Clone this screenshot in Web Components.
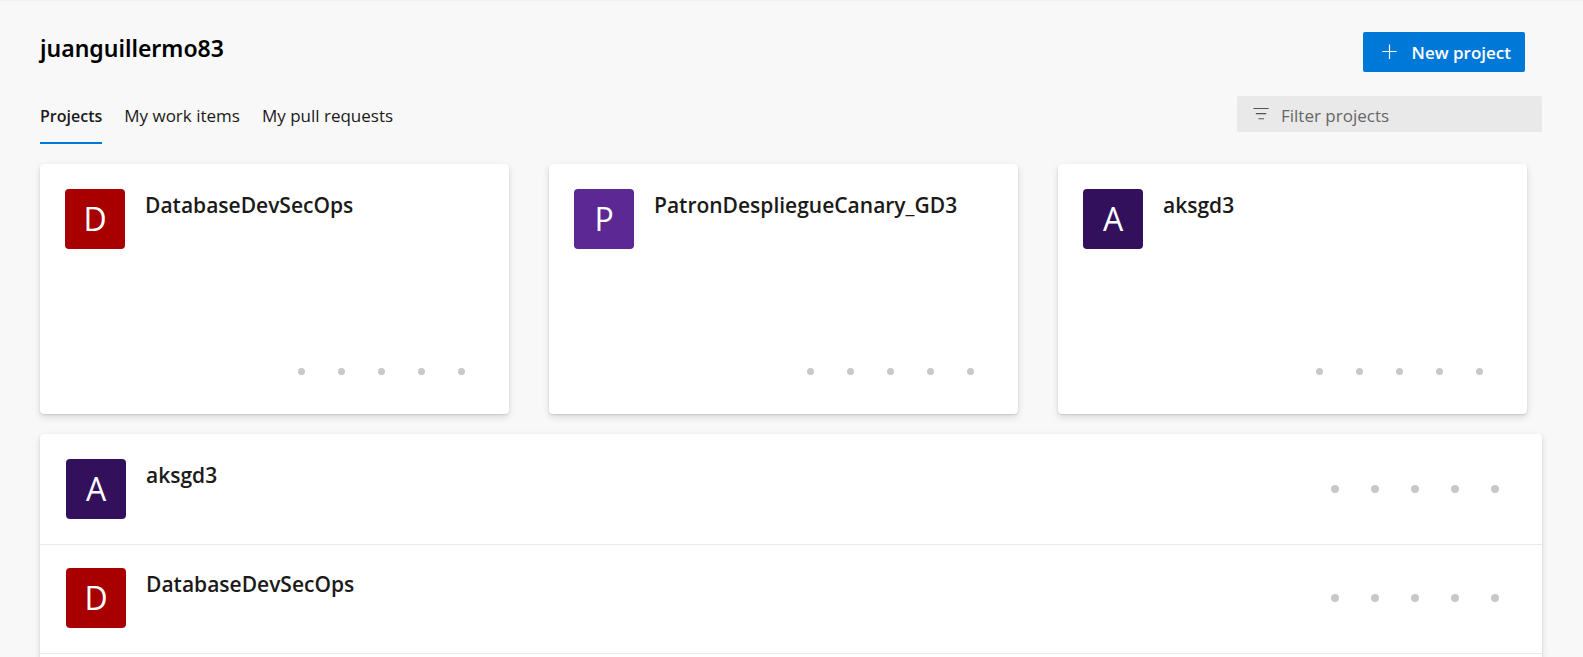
<!DOCTYPE html>
<html lang="en">
<head>
<meta charset="utf-8">
<meta name="viewport" content="width=device-width, initial-scale=1">
<title>juanguillermo83 - Projects</title>
<style>
  body {
    margin: 0;
    background: #f8f8f8;
    color: #1b1a19;
    font-family: "Open Sans", "Noto Sans", sans-serif;
    font-size: 17px;
  }
</style>
</head>
<body>
<projects-page>
  <org-header slot="header" name="juanguillermo83"></org-header>
  <tab-bar slot="tabs">
    <tab-link href="#projects" active>Projects</tab-link>
    <tab-link href="#work-items">My work items</tab-link>
    <tab-link href="#pull-requests">My pull requests</tab-link>
    <filter-box slot="filter" label="Filter projects"></filter-box>
  </tab-bar>
  <project-card slot="cards" name="DatabaseDevSecOps" color="#a80000"></project-card>
  <project-card slot="cards" name="PatronDespliegueCanary_GD3" color="#5c2893"></project-card>
  <project-card slot="cards" name="aksgd3" color="#32105c"></project-card>
  <project-row slot="rows" name="aksgd3" color="#32105c"></project-row>
  <project-row slot="rows" name="DatabaseDevSecOps" color="#a80000"></project-row>
</projects-page>

<script>
  class Component extends HTMLElement {
    connectedCallback() {
      if (this.shadowRoot) return;
      this.attachShadow({ mode: "open" }).innerHTML = this.render();
    }
    attr(name) {
      return this.getAttribute(name) || "";
    }
  }

  customElements.define("projects-page", class extends Component {
    render() {
      return `
        <style>
          :host {
            --shadow: 0 3px 7px rgba(0, 0, 0, .13), 0 1px 2px rgba(0, 0, 0, .11);
            box-sizing: border-box;
            display: flex;
            flex-direction: column;
            gap: 20px;
            min-height: 100vh;
            padding: 31px 41px 0 40px;
            border-top: 1px solid #f1f1f1;
          }
          .top { display: grid; gap: 24px; }
          .cards {
            display: grid;
            grid-template-columns: repeat(3, minmax(0, 1fr));
            gap: 40px;
            margin-right: 15px;
          }
          .list {
            flex: 1;
            padding-top: 2px;
            background: #fff;
            border-radius: 4px 4px 0 0;
            box-shadow: var(--shadow);
          }
        </style>
        <div class="top"><slot name="header"></slot><slot name="tabs"></slot></div>
        <main class="cards"><slot name="cards"></slot></main>
        <section class="list" aria-label="All projects"><slot name="rows"></slot></section>`;
    }
  });

  customElements.define("org-header", class extends Component {
    render() {
      return `
        <style>
          :host {
            display: flex;
            align-items: flex-start;
            justify-content: space-between;
            padding-right: 17px;
          }
          h1 {
            margin: 0;
            color: #000;
            font: 600 23px/32px "Noto Sans", "Open Sans", sans-serif;
          }
          button {
            display: flex;
            align-items: center;
            gap: 15px;
            height: 40px;
            padding: 0 14px 0 18px;
            border: 0;
            border-radius: 2px;
            background: #0078d7;
            color: #fff;
            font: 600 17px "Open Sans", "Noto Sans", sans-serif;
          }
        </style>
        <h1>${this.attr("name")}</h1>
        <button type="button">
          <svg width="16" height="16" viewBox="0 0 16 16" fill="none" stroke="#fff" stroke-width="1.2" aria-hidden="true">
            <path d="M8.5 .5v14.5M1.3 7.5h14.4"/>
          </svg>
          New project
        </button>`;
    }
  });

  customElements.define("tab-bar", class extends Component {
    render() {
      return `
        <style>
          :host { display: flex; align-items: flex-start; justify-content: space-between; }
          nav { display: flex; gap: 22px; }
        </style>
        <nav aria-label="Views"><slot></slot></nav>
        <slot name="filter"></slot>`;
    }
  });

  customElements.define("tab-link", class extends Component {
    render() {
      return `
        <style>
          :host { display: block; }
          a {
            display: block;
            padding-bottom: 6px;
            border-bottom: 2px solid transparent;
            color: inherit;
            line-height: 40px;
            text-decoration: none;
            white-space: nowrap;
          }
          :host([active]) a { border-color: #0078d7; font-weight: 600; font-size: 16px; }
        </style>
        <a href="${this.attr("href")}"><slot></slot></a>`;
    }
  });

  customElements.define("filter-box", class extends Component {
    render() {
      return `
        <style>
          :host { display: block; width: 305px; }
          label {
            display: flex;
            align-items: center;
            gap: 12px;
            height: 36px;
            padding: 0 16px;
            border-radius: 2px;
            background: #e9e9e9;
          }
          svg { flex: none; }
          input {
            flex: 1;
            min-width: 0;
            height: 36px;
            padding: 2px 0 0;
            box-sizing: border-box;
            border: 0;
            outline: 0;
            background: none;
            color: #1b1a19;
            font: 17px "Open Sans", "Noto Sans", sans-serif;
          }
          input::placeholder { color: #666; opacity: 1; }
        </style>
        <label>
          <svg width="16" height="16" viewBox="0 0 16 16" fill="none" stroke="#555" stroke-width="1.1" aria-hidden="true">
            <path d="M.5 2.5h15.2M2.8 7.6h10.4M5.4 12.7h5.6"/>
          </svg>
          <input type="text" placeholder="${this.attr("label")}" aria-label="${this.attr("label")}">
        </label>`;
    }
  });

  customElements.define("project-avatar", class extends Component {
    render() {
      return `
        <style>
          :host {
            display: block;
            flex: none;
            width: 60px;
            border-radius: 4px;
            background: ${this.attr("color")};
            color: #fff;
            font-size: 32px;
            line-height: 60px;
            text-align: center;
          }
        </style>
        <slot></slot>`;
    }
  });

  customElements.define("loading-dots", class extends Component {
    render() {
      return `
        <style>
          :host { --size: 8px; display: flex; gap: calc(40px - var(--size)); }
          i { width: var(--size); height: var(--size); border-radius: 50%; background: #c8c8c8; }
        </style>
        ${"<i></i>".repeat(5)}`;
    }
  });

  const titleStyle = `
    a {
      color: inherit;
      font-size: 21px;
      font-weight: 600;
      line-height: 32px;
      text-decoration: none;
    }`;

  customElements.define("project-card", class extends Component {
    render() {
      const name = this.attr("name");
      return `
        <style>
          :host {
            box-sizing: border-box;
            display: flex;
            flex-direction: column;
            justify-content: space-between;
            min-height: 250px;
            padding: 25px 25px 39px;
            border-radius: 4px;
            background: #fff;
            box-shadow: var(--shadow);
          }
          .head { display: flex; align-items: flex-start; gap: 20px; }
          loading-dots { --size: 7px; align-self: flex-end; margin-right: 19px; }
          ${titleStyle}
        </style>
        <div class="head">
          <project-avatar color="${this.attr("color")}">${name[0].toUpperCase()}</project-avatar>
          <a href="#${name}">${name}</a>
        </div>
        <loading-dots></loading-dots>`;
    }
  });

  customElements.define("project-row", class extends Component {
    render() {
      const name = this.attr("name");
      return `
        <style>
          :host {
            display: flex;
            align-items: center;
            gap: 20px;
            padding: 23px 43px 25px 26px;
            border-bottom: 1px solid #eaeaea;
          }
          a { flex: 1; align-self: flex-start; }
          ${titleStyle}
        </style>
        <project-avatar color="${this.attr("color")}">${name[0].toUpperCase()}</project-avatar>
        <a href="#${name}">${name}</a>
        <loading-dots></loading-dots>`;
    }
  });
</script>
</body>
</html>
